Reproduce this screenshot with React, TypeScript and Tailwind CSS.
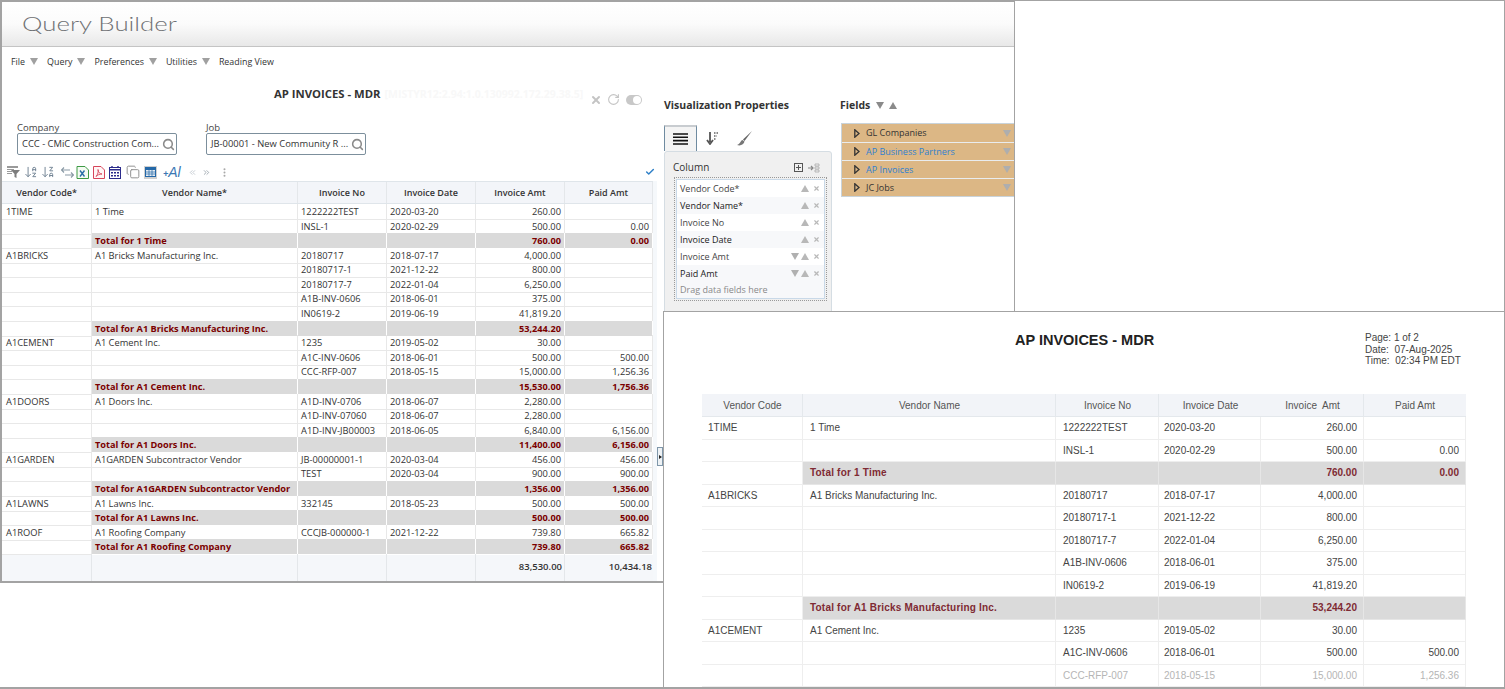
import { ArrowDownAZ, ArrowDownZA, Check, ChevronsLeft, ChevronsRight, Copy, MoreVertical, RotateCw, Search, X } from 'lucide-react';

type Row = { code?: string; name?: string; no?: string; date?: string; amt?: string; paid?: string; total?: boolean; faded?: boolean };

const mainRows: Row[] = [
  { code: '1TIME', name: '1 Time', no: '1222222TEST', date: '2020-03-20', amt: '260.00' },
  { no: 'INSL-1', date: '2020-02-29', amt: '500.00', paid: '0.00' },
  { name: 'Total for 1 Time', amt: '760.00', paid: '0.00', total: true },
  { code: 'A1BRICKS', name: 'A1 Bricks Manufacturing Inc.', no: '20180717', date: '2018-07-17', amt: '4,000.00' },
  { no: '20180717-1', date: '2021-12-22', amt: '800.00' },
  { no: '20180717-7', date: '2022-01-04', amt: '6,250.00' },
  { no: 'A1B-INV-0606', date: '2018-06-01', amt: '375.00' },
  { no: 'IN0619-2', date: '2019-06-19', amt: '41,819.20' },
  { name: 'Total for A1 Bricks Manufacturing Inc.', amt: '53,244.20', total: true },
  { code: 'A1CEMENT', name: 'A1 Cement Inc.', no: '1235', date: '2019-05-02', amt: '30.00' },
  { no: 'A1C-INV-0606', date: '2018-06-01', amt: '500.00', paid: '500.00' },
  { no: 'CCC-RFP-007', date: '2018-05-15', amt: '15,000.00', paid: '1,256.36' },
  { name: 'Total for A1 Cement Inc.', amt: '15,530.00', paid: '1,756.36', total: true },
  { code: 'A1DOORS', name: 'A1 Doors Inc.', no: 'A1D-INV-0706', date: '2018-06-07', amt: '2,280.00' },
  { no: 'A1D-INV-07060', date: '2018-06-07', amt: '2,280.00' },
  { no: 'A1D-INV-JB00003', date: '2018-06-05', amt: '6,840.00', paid: '6,156.00' },
  { name: 'Total for A1 Doors Inc.', amt: '11,400.00', paid: '6,156.00', total: true },
  { code: 'A1GARDEN', name: 'A1GARDEN Subcontractor Vendor', no: 'JB-00000001-1', date: '2020-03-04', amt: '456.00', paid: '456.00' },
  { no: 'TEST', date: '2020-03-04', amt: '900.00', paid: '900.00' },
  { name: 'Total for A1GARDEN Subcontractor Vendor', amt: '1,356.00', paid: '1,356.00', total: true },
  { code: 'A1LAWNS', name: 'A1 Lawns Inc.', no: '332145', date: '2018-05-23', amt: '500.00', paid: '500.00' },
  { name: 'Total for A1 Lawns Inc.', amt: '500.00', paid: '500.00', total: true },
  { code: 'A1ROOF', name: 'A1 Roofing Company', no: 'CCCJB-000000-1', date: '2021-12-22', amt: '739.80', paid: '665.82' },
  { name: 'Total for A1 Roofing Company', amt: '739.80', paid: '665.82', total: true },
];

const reportRows: Row[] = [
  ...mainRows.slice(0, 11),
  { ...mainRows[11], faded: true },
];

const columns = [
  { label: 'Vendor Code*', up: true },
  { label: 'Vendor Name*', up: true },
  { label: 'Invoice No', up: true },
  { label: 'Invoice Date', up: true },
  { label: 'Invoice Amt', up: true, down: true },
  { label: 'Paid Amt', up: true, down: true },
];

const fields = [
  { label: 'GL Companies', color: 'text-[#333333]' },
  { label: 'AP Business Partners', color: 'text-[#2f80d0]' },
  { label: 'AP Invoices', color: 'text-[#2f80d0]' },
  { label: 'JC Jobs', color: 'text-[#333333]' },
];

function TriDown({ className = '' }: { className?: string }) {
  return (
    <svg width="8" height="7" viewBox="0 0 8 7" className={className}>
      <path d="M0 0h8L4 7z" fill="currentColor" />
    </svg>
  );
}

function TriUp({ className = '' }: { className?: string }) {
  return (
    <svg width="8" height="7" viewBox="0 0 8 7" className={className}>
      <path d="M0 7h8L4 0z" fill="currentColor" />
    </svg>
  );
}

function MenuItem({ label }: { label: string }) {
  return (
    <div className="flex items-center gap-[5px]">
      <span>{label}</span>
      <TriDown className="text-[#a0a0a0]" />
    </div>
  );
}

function LookupField({ label, value, className = '' }: { label: string; value: string; className?: string }) {
  return (
    <div className={className}>
      <div className="h-[11px] text-[9.5px] leading-[11px] text-[#444]">{label}</div>
      <div className="flex h-[22px] w-[160px] items-center justify-between rounded-[2px] border border-[#7c8f9c] pr-[1px] pl-[4px] text-[9.4px] whitespace-nowrap text-[#333]">
        <span>{value}</span>
        <Search size={13} strokeWidth={2.8} className="text-[#8a8a8a]" />
      </div>
    </div>
  );
}

function Toolbar() {
  return (
    <div className="flex h-[16px] items-center pb-[2px] pl-[5px]">
      <svg width="13" height="12" viewBox="0 0 13 12">
        <path d="M0 0h11v2H0zM0 3h7v1H0zM0 5h5v1H0zM0 7h5v1H0z" fill="#9a9a9a" />
        <path d="M4 4h9L9.5 8v4l-2-1V8z" fill="#7d7d7d" />
      </svg>
      <ArrowDownAZ size={14} strokeWidth={1.6} className="ml-[4px] text-[#6d7f90]" />
      <ArrowDownZA size={14} strokeWidth={1.6} className="ml-[3px] text-[#6d7f90]" />
      <svg width="13" height="11" viewBox="0 0 13 11" className="ml-[6px]">
        <path d="M0 3h9M3 0.5L0.5 3 3 5.5M13 8H4M10 5.5L12.5 8 10 10.5" fill="none" stroke="#8a9aa6" strokeWidth="1.2" />
      </svg>
      <svg width="13" height="13" viewBox="0 0 13 13" className="ml-[2px]">
        <path d="M1 .5h8l3.5 3.5v8.5H1z" fill="#f4fbf2" stroke="#3f9a45" />
        <path d="M4 4.5l4.5 6M8.5 4.5l-4.5 6" stroke="#2b6fa8" strokeWidth="1.4" />
      </svg>
      <svg width="12" height="13" viewBox="0 0 12 13" className="ml-[4px]">
        <path d="M.5.5h7.5l3.5 3.5v8.5H.5z" fill="#fff5f5" stroke="#d6455b" />
        <path d="M3 10.5c2-2 2.5-5 2-7 0 2.500 2 4.500 4 4.500-2.500 0-4.500 1-6 2.500z" fill="none" stroke="#d6455b" strokeWidth="0.9" />
      </svg>
      <svg width="12" height="13" viewBox="0 0 12 13" className="ml-[4px]">
        <path d="M3 0v2M9 0v2" stroke="#2c2c8c" strokeWidth="1.4" />
        <rect x="0.500" y="1.500" width="11" height="11" fill="#fff" stroke="#2c2c8c" />
        <path d="M1 3h10v1.500H1zM2 6h2v1.500H2zM5 6h2v1.500H5zM8 6h2v1.500H8zM2 9h2v1.500H2zM5 9h2v1.500H5zM8 9h2v1.500H8z" fill="#2c2c8c" />
      </svg>
      <Copy size={14} strokeWidth={1.6} className="ml-[5px] text-[#8c8c8c]" />
      <div className="ml-[4px] flex h-[13px] w-[13px] items-center justify-center bg-[#d0d0d0]">
        <svg width="11" height="10" viewBox="0 0 11 10">
          <rect width="11" height="10" fill="#2468a8" />
          <rect x="1" y="3" width="9" height="6" fill="#e8eef4" />
          <path d="M4 3v6M7 3v6M1 5h9M1 7h9" stroke="#2468a8" strokeWidth="0.7" />
        </svg>
      </div>
      <div className="ml-[6px] flex w-[21px] items-baseline font-['Liberation_Sans',sans-serif] text-[#3c78b4] italic">
        <span className="text-[9px] leading-none font-bold">+</span>
        <span className="text-[14px] leading-none">Al</span>
      </div>
      <ChevronsLeft size={9} strokeWidth={2} className="ml-[4px] text-[#b4bcc4]" />
      <ChevronsRight size={9} strokeWidth={2} className="ml-[5px] text-[#8a949e]" />
      <MoreVertical size={11} strokeWidth={2.4} className="ml-[8px] text-[#a8a8a8]" />
    </div>
  );
}

function MainTable() {
  const cols = 'grid grid-cols-[90px_206px_89px_89px_89px_88px]';
  const border = 'border-r border-[#e4e7ea]';
  return (
    <div className="w-[651px] bg-white text-[9.3px] text-[#333]">
      <div className={`${cols} h-[23px] items-stretch border-y border-[#dfe5ea] bg-[#f3f5f9] text-[9px] font-semibold text-[#333]`}>
        {['Vendor Code*', 'Vendor Name*', 'Invoice No', 'Invoice Date', 'Invoice Amt', 'Paid Amt'].map((h) => (
          <div key={h} className={`flex items-center justify-center ${border}`}>
            {h}
          </div>
        ))}
      </div>
      {mainRows.map((r, i) => (
        <div key={i} className={`${cols} h-[14.58px] leading-[15px] ${r.total ? 'text-[9.2px] font-bold text-[#7a0000]' : ''}`}>
          <div className={`truncate border-b border-[#e8e8e8] pl-[4px] ${border}`}>{r.code}</div>
          <div className={`border-b pl-[3px] whitespace-nowrap ${border} ${r.total ? 'border-white bg-[#dadada]' : 'border-[#e8e8e8]'}`}>{r.name}</div>
          <div className={`border-b pl-[3px] ${border} ${r.total ? 'border-white bg-[#dadada]' : 'border-[#e8e8e8]'}`}>{r.no}</div>
          <div className={`border-b pl-[3px] ${border} ${r.total ? 'border-white bg-[#dadada]' : 'border-[#e8e8e8]'}`}>{r.date}</div>
          <div className={`border-b pr-[3px] text-right ${border} ${r.total ? 'border-white bg-[#dadada]' : 'border-[#e8e8e8]'}`}>{r.amt}</div>
          <div className={`border-b pr-[3px] text-right ${border} ${r.total ? 'border-white bg-[#dadada]' : 'border-[#e8e8e8]'}`}>{r.paid}</div>
        </div>
      ))}
      <div className={`${cols} h-[27px] bg-[#f5f7fa] text-[9.5px] font-semibold text-[#333]`}>
        <div className={border} />
        <div className={border} />
        <div className={border} />
        <div className={border} />
        <div className={`flex items-center justify-end pr-[2px] ${border}`}>83,530.00</div>
        <div className="flex items-center justify-end pr-[1px]">10,434.18</div>
      </div>
    </div>
  );
}

function ColumnPanel() {
  return (
    <div className="h-[161px] w-[168px] rounded-t-[3px] border border-[#d5dde3] bg-[#f0f0f0] pt-[8px]">
      <div className="flex h-[15px] items-center justify-between pr-[11px] pl-[8px] text-[10px] text-[#333]">
        <span>Column</span>
        <div className="flex items-center gap-[5px]">
          <svg width="9" height="9" viewBox="0 0 9 9">
            <rect x="0.500" y="0.500" width="8" height="8" fill="none" stroke="#555" />
            <path d="M4.500 2v5M2 4.500h5" stroke="#555" />
          </svg>
          <svg width="12" height="10" viewBox="0 0 12 10">
            <path d="M0 5h5M3 3l2 2-2 2" fill="none" stroke="#888" strokeWidth="1.200" />
            <path d="M7 1h4v2H7zM7 4h4v2H7zM7 7h4v2H7z" fill="none" stroke="#aaa" strokeWidth="0.800" />
          </svg>
        </div>
      </div>
      <div className="mt-[2px] ml-[9px] w-[153px] border border-dotted border-[#999] p-[1px]">
        <div className="border border-[#c9d9e8] bg-white">
          {columns.map((c, i) => (
            <div key={c.label} className={`flex h-[17px] items-center pr-[4px] pl-[3px] text-[9px] ${i % 2 ? 'bg-[#f7f8fa] text-[#222]' : 'text-[#444]'}`}>
              <span className="flex-1">{c.label}</span>
              {c.down && <TriDown className="mr-[2px] text-[#b0b0b0]" />}
              <TriUp className="text-[#b8b8b8]" />
              <X size={7} strokeWidth={4} className="ml-[4px] text-[#b8b8b8]" />
            </div>
          ))}
          <div className="flex h-[16px] items-center bg-[#f7f8fa] pl-[3px] text-[9px] text-[#8a8a8a]">Drag data fields here</div>
        </div>
      </div>
    </div>
  );
}

function RightPanel() {
  return (
    <div className="flex items-start pt-[20px]">
      <div className="w-[176px]">
        <div className="h-[17px] text-[10.5px] leading-[17px] font-bold text-[#333]">Visualization Properties</div>
        <div className="mt-[11px] flex h-[26px] items-center">
          <div className="flex h-[26px] w-[33px] items-center justify-center border-x border-t-2 border-x-[#6f8ba0] border-t-[#c8ccd0] bg-[#f4f4f4]">
            <svg width="15" height="12" viewBox="0 0 15 12">
              <path d="M0 1h15M0 4.300h15M0 7.600h15M0 11h15" stroke="#111" strokeWidth="1.600" />
            </svg>
          </div>
          <svg width="13" height="13" viewBox="0 0 13 13" className="ml-[9px]">
            <path d="M4 0v10M1 8l3 4 3-4" fill="none" stroke="#555" strokeWidth="1.800" />
            <path d="M8 1h4M8 4h3M8 7h2" stroke="#666" strokeWidth="1.500" strokeDasharray="1.500 1" />
          </svg>
          <svg width="15" height="15" viewBox="0 0 15 15" className="ml-[18px]">
            <path d="M15 0L6 8.500 7.500 10z" fill="#666" />
            <path d="M5.500 9C3.500 9.500 3.500 13 0 14c3.500 1.200 7-.500 7.500-3.500z" fill="#777" />
          </svg>
        </div>
        <ColumnPanel />
      </div>
      <div className="w-[174px]">
        <div className="flex h-[17px] items-center gap-[5px] text-[10.5px] font-bold text-[#333]">
          <span className="mr-[1px]">Fields</span>
          <TriDown className="text-[#8a8a8a]" />
          <TriUp className="text-[#8a8a8a]" />
        </div>
        <div className="mt-[9px] ml-[1px] border-y border-l border-[#c9d3da]">
          {fields.map((f, i) => (
            <div key={f.label} className={`flex h-[18px] items-center bg-[#dcb785] pr-[3px] pl-[12px] text-[9px] ${f.color} ${i ? 'border-t border-[#e9ecee]' : ''}`}>
              <svg width="6" height="9" viewBox="0 0 6 9" className="mr-[6px]">
                <path d="M.8.800L5 4.500.8 8.200z" fill="none" stroke="#333" strokeWidth="1.300" />
              </svg>
              <span className="flex-1">{f.label}</span>
              <TriDown className="text-[#aeaeae]" />
            </div>
          ))}
        </div>
      </div>
    </div>
  );
}

function ReportPopup() {
  const cols = 'grid grid-cols-[101px_253px_103px_102px_103px_102px]';
  return (
    <div className="absolute top-[310px] left-[663px] h-[376px] w-[841px] overflow-hidden border-t border-l border-[#a3a3a3] bg-white font-['Liberation_Sans',sans-serif]">
      <div className="flex h-[82px]">
        <div className="w-[701px] pt-[19px] pl-[351px] text-[14.5px] leading-[18px] font-bold whitespace-nowrap text-[#222]">AP INVOICES - MDR</div>
        <div className="pt-[20px] text-[10px] leading-[11.5px] text-[#444]">
          <div>Page: 1 of 2</div>
          <div>Date:&nbsp; 07-Aug-2025</div>
          <div>Time:&nbsp; 02:34 PM EDT</div>
        </div>
      </div>
      <div className="ml-[38px] w-[764px] text-[10px] text-[#444]">
        <div className={`${cols} h-[23px] items-center border-b border-[#e4e8ec] bg-[#f2f4f8] text-center text-[#555]`}>
          <div className="flex h-full items-center justify-center border-r border-[#e4e8ec] pl-[1px]">Vendor Code</div>
          <div className="flex h-full items-center justify-center border-r border-[#e4e8ec] pl-[1px]">Vendor Name</div>
          <div className="flex h-full items-center justify-center border-r border-[#e4e8ec] pl-[1px]">Invoice No</div>
          <div className="flex h-full items-center justify-center pl-[1px]">Invoice Date</div>
          <div className="flex h-full items-center justify-center border-r border-[#e4e8ec] pl-[1px]">Invoice&nbsp; Amt</div>
          <div className="flex h-full items-center justify-center">Paid Amt</div>
        </div>
        {reportRows.map((r, i) => {
          const cell = `flex items-center border-r border-b ${r.total ? 'border-[#e6e6e6] bg-[#dadada]' : 'border-[#eeeeee]'}`;
          return (
            <div key={i} className={`${cols} h-[22.5px] ${r.total ? 'font-bold text-[#7f2a33]' : ''} ${r.faded ? 'text-[#b5b5b5]' : ''}`}>
              <div className="flex items-center border-r border-b border-[#eeeeee] pl-[6px]">{r.code}</div>
              <div className={`${cell} pl-[7px] whitespace-nowrap ${r.total ? 'tracking-[0.2px]' : ''}`}>{r.name}</div>
              <div className={`${cell} pl-[7px]`}>{r.no}</div>
              <div className={`${cell} pl-[5px]`}>{r.date}</div>
              <div className={`${cell} justify-end pr-[6px]`}>{r.amt}</div>
              <div className={`${cell} justify-end pr-[6px]`}>{r.paid}</div>
            </div>
          );
        })}
      </div>
    </div>
  );
}

export default function App() {
  return (
    <div className="relative h-[689px] w-[1505px] overflow-hidden border-t border-r border-b-2 border-[#a3a3a3] bg-white font-['Open_Sans',sans-serif]">
      <div className="h-[582px] w-[1015px] border-t border-r border-b-2 border-l-2 border-[#a3a3a3]">
        <div className="flex h-[45px] items-center border-b border-[#c4c4c4] bg-gradient-to-b from-white via-[#fbfbfb] to-[#e8e8e8] pl-[20px] font-['Lato',sans-serif] text-[19px] font-light text-[#6f7174]">
          <span className="inline-block origin-left scale-x-[1.36]">Query Builder</span>
        </div>
        <div className="flex h-[30px] items-center gap-[9px] pl-[9px] text-[8.9px] text-[#333]">
          <MenuItem label="File" />
          <MenuItem label="Query" />
          <MenuItem label="Preferences" />
          <MenuItem label="Utilities" />
          <span>Reading View</span>
        </div>
        <div className="flex">
          <div className="w-[663px]">
            <div className="flex h-[33px] items-start">
              <div className="flex w-[588px] pt-[9px] pl-[272px] text-[11.3px] leading-[16px] font-bold whitespace-nowrap text-[#333]">
                <span>AP INVOICES - MDR</span>
                <span className="ml-[4px] text-[10.5px] text-[#f8f8f8]">[MISTYR12:2.94:1.0.130992.172.29.38.5]</span>
              </div>
              <div className="flex items-center gap-[5px] pt-[16px] text-[#c4c4c4]">
                <X size={12} strokeWidth={4} />
                <RotateCw size={13} strokeWidth={2} />
                <div className="ml-[1px] flex h-[10px] w-[16px] items-center justify-end rounded-full bg-[#c8c8c8] pr-[1px]">
                  <div className="h-[8px] w-[8px] rounded-full bg-white" />
                </div>
              </div>
            </div>
            <div className="flex pt-[12px] pl-[15px]">
              <LookupField label="Company" value="CCC - CMiC Construction Com..." />
              <LookupField label="Job" value="JB-00001 - New Community R ..." className="ml-[29px]" />
            </div>
            <div className="relative mt-[10px]">
              <Toolbar />
              <Check size={10} strokeWidth={3.5} className="absolute top-[2px] left-[643px] text-[#2f80c8]" />
            </div>
            <div className="flex">
              <MainTable />
              <div className="w-[4px] bg-[#f5f8fb]" />
              <div className="mt-[266px] flex h-[19px] w-[6px] items-center justify-center border border-[#7f97aa] bg-[#eef2f5]">
                <div className="h-0 w-0 border-y-[2.5px] border-l-[3px] border-y-transparent border-l-[#222]" />
              </div>
            </div>
          </div>
          <RightPanel />
        </div>
      </div>
      <ReportPopup />
    </div>
  );
}
